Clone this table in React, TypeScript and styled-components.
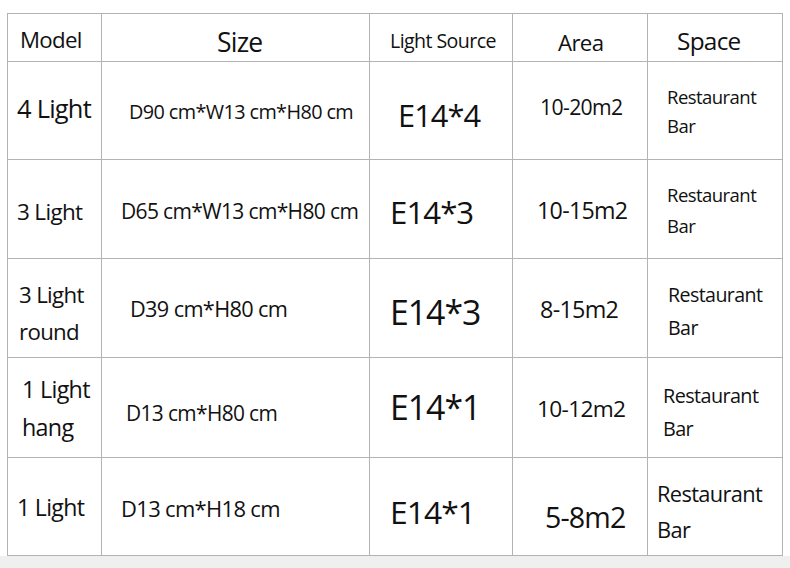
import { createGlobalStyle, styled } from "styled-components";

const GlobalStyle = createGlobalStyle`
  html, body {
    margin: 0;
    padding: 0;
    background: #ffffff;
  }
  body {
    font-family: "Open Sans", "Noto Sans", "Liberation Sans", sans-serif;
    color: #111111;
  }
`;

// half of (ascent - descent) for Open Sans, used to place a baseline
const BASE_RATIO = 0.388;
// a touch bigger and tighter, closer to the narrow face in the picture
const SCALE = 1.06;

const Page = styled.div`
  width: 790px;
  padding-top: 13px;
`;

const Table = styled.div`
  margin-left: 7px;
  display: grid;
  grid-template-columns: 94px 268px 143px 135px 135px;
  border-left: 1px solid #b3b3b3;
  border-top: 1px solid #b3b3b3;
  width: max-content;
`;

const Cell = styled.div<{ $h: number; $x: number; $top: number }>`
  box-sizing: border-box;
  height: ${(p) => p.$h}px;
  border-right: 1px solid #b3b3b3;
  border-bottom: 1px solid #b3b3b3;
  padding: ${(p) => p.$top}px 0 0 ${(p) => p.$x}px;
  overflow: hidden;
`;

const Line = styled.span<{ $size: number; $gap: number }>`
  display: block;
  white-space: nowrap;
  font-size: ${(p) => p.$size}px;
  font-weight: 500;
  letter-spacing: -0.03em;
  line-height: ${(p) => p.$gap}px;
`;

const Band = styled.div`
  height: 20px;
  background: #efefef;
`;

type CellSpec = {
  x: number;
  base: number;
  size: number;
  gap?: number;
  lines: string[];
};

type RowSpec = { h: number; cells: CellSpec[] };

const rows: RowSpec[] = [
  {
    h: 48,
    cells: [
      { x: 12, base: 34, size: 21, lines: ["Model"] },
      { x: 115, base: 38, size: 25, lines: ["Size"] },
      { x: 20, base: 34, size: 18.5, lines: ["Light Source"] },
      { x: 45, base: 37, size: 21, lines: ["Area"] },
      { x: 29, base: 36, size: 23, lines: ["Space"] },
    ],
  },
  {
    h: 98,
    cells: [
      { x: 9, base: 56, size: 24, lines: ["4 Light"] },
      { x: 27, base: 58, size: 18.7, lines: ["D90 cm*W13 cm*H80 cm"] },
      { x: 28, base: 65, size: 29, lines: ["E14*4"] },
      { x: 27, base: 53, size: 20, lines: ["10-20m2"] },
      { x: 19, base: 42, size: 17.5, gap: 29, lines: ["Restaurant", "Bar"] },
    ],
  },
  {
    h: 99,
    cells: [
      { x: 9, base: 60, size: 21.2, lines: ["3 Light"] },
      { x: 19, base: 60, size: 19.8, lines: ["D65 cm*W13 cm*H80 cm"] },
      { x: 20, base: 65, size: 29.4, lines: ["E14*3"] },
      { x: 24, base: 59, size: 21.9, lines: ["10-15m2"] },
      { x: 19, base: 42, size: 17.5, gap: 31, lines: ["Restaurant", "Bar"] },
    ],
  },
  {
    h: 99,
    cells: [
      { x: 11, base: 44, size: 21, gap: 37, lines: ["3 Light", "round"] },
      { x: 28, base: 58, size: 20.5, lines: ["D39 cm*H80 cm"] },
      { x: 20, base: 66, size: 31.9, lines: ["E14*3"] },
      { x: 27, base: 59, size: 22, lines: ["8-15m2"] },
      { x: 20, base: 43, size: 18.5, gap: 33, lines: ["Restaurant", "Bar"] },
    ],
  },
  {
    h: 100,
    cells: [
      { x: 14, base: 40, size: 22, gap: 38, lines: ["1 Light", "hang"] },
      { x: 24, base: 64, size: 19.7, lines: ["D13 cm*H80 cm"] },
      { x: 20, base: 62, size: 31.9, lines: ["E14*1"] },
      { x: 24, base: 59, size: 21.4, lines: ["10-12m2"] },
      { x: 15, base: 45, size: 18.7, gap: 33, lines: ["Restaurant", "Bar"] },
    ],
  },
  {
    h: 98,
    cells: [
      { x: 9, base: 58, size: 21.8, lines: ["1 Light"] },
      { x: 19, base: 59, size: 20.7, lines: ["D13 cm*H18 cm"] },
      { x: 20, base: 66, size: 30, lines: ["E14*1"] },
      { x: 32, base: 70, size: 27, lines: ["5-8m2"] },
      { x: 9, base: 44, size: 20.6, gap: 36, lines: ["Restaurant", "Bar"] },
    ],
  },
];

function SpecCell({ h, spec }: { h: number; spec: CellSpec }) {
  const size = spec.size * SCALE;
  const gap = spec.gap ?? Math.round(size * 1.3);
  const top = spec.base - (gap / 2 + size * BASE_RATIO);
  return (
    <Cell $h={h} $x={spec.x} $top={top}>
      {spec.lines.map((line) => (
        <Line key={line} $size={size} $gap={gap}>
          {line}
        </Line>
      ))}
    </Cell>
  );
}

export default function App() {
  return (
    <Page>
      <GlobalStyle />
      <Table>
        {rows.map((row, r) =>
          row.cells.map((cell, c) => (
            <SpecCell key={`${r}-${c}`} h={row.h} spec={cell} />
          ))
        )}
      </Table>
      <Band />
    </Page>
  );
}
